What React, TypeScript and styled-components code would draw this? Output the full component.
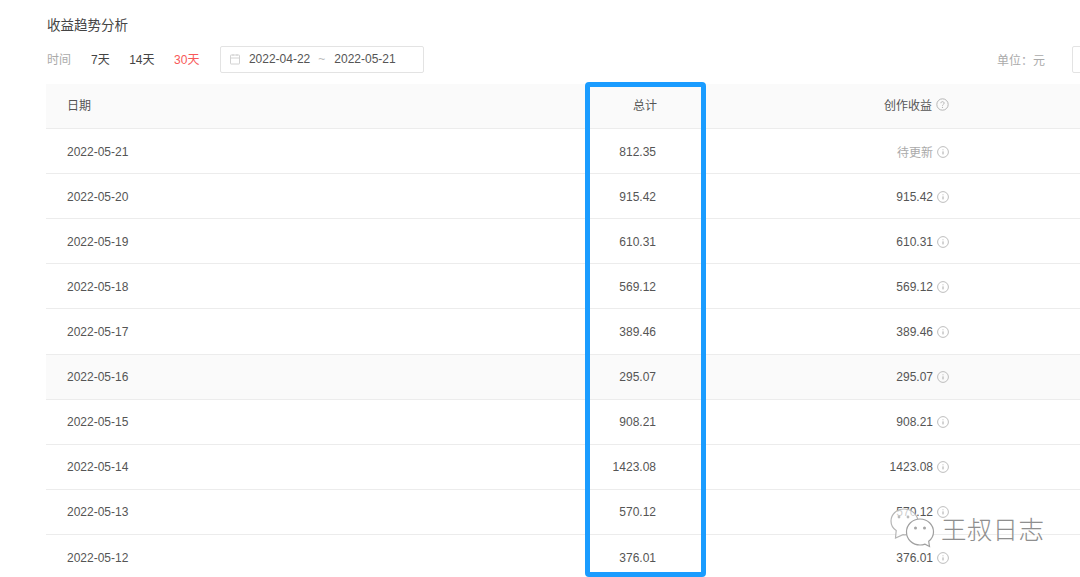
import React from 'react';
import styled, { createGlobalStyle } from 'styled-components';

const rows = [
  { date: '2022-05-21', total: '812.35', income: '待更新', pending: true },
  { date: '2022-05-20', total: '915.42', income: '915.42' },
  { date: '2022-05-19', total: '610.31', income: '610.31' },
  { date: '2022-05-18', total: '569.12', income: '569.12' },
  { date: '2022-05-17', total: '389.46', income: '389.46' },
  { date: '2022-05-16', total: '295.07', income: '295.07', hovered: true },
  { date: '2022-05-15', total: '908.21', income: '908.21' },
  { date: '2022-05-14', total: '1423.08', income: '1423.08' },
  { date: '2022-05-13', total: '570.12', income: '570.12' },
  { date: '2022-05-12', total: '376.01', income: '376.01' },
];

const GlobalStyle = createGlobalStyle`
  html, body {
    margin: 0;
    padding: 0;
    background: #fff;
    overflow: hidden;
  }
  * {
    box-sizing: border-box;
  }
`;

const Page = styled.div`
  position: relative;
  width: 1080px;
  height: 577px;
  overflow: hidden;
  padding: 16px 0 0 46px;
  background: #fff;
  font-family: "Liberation Sans", "Noto Sans CJK SC", sans-serif;
  font-size: 12px;
  color: #444;
`;

const Title = styled.h2`
  margin: 0 0 11px;
  padding-left: 1px;
  font-size: 13.5px;
  line-height: 19px;
  font-weight: 400;
  color: #444;
`;

const Toolbar = styled.div`
  display: flex;
  align-items: center;
  height: 27px;
  margin-bottom: 11px;
`;

const Label = styled.span`
  width: 45px;
  padding: 0 0 2px 1px;
  color: #aaa;
`;

const Range = styled.span<{ $active?: boolean }>`
  margin-right: 19.5px;
  padding-bottom: 2px;
  color: ${(p) => (p.$active ? '#f85959' : '#444')};
`;

const DatePicker = styled.div`
  display: flex;
  align-items: center;
  width: 204px;
  height: 27px;
  margin-left: 1px;
  padding: 0 0 2px 8px;
  border: 1px solid #e3e3e3;
  border-radius: 2px;
  color: #555;
`;

const DateSep = styled.span`
  margin: 0 9px 0 8px;
  color: #bbb;
`;

const Unit = styled.span`
  margin-left: auto;
  color: #aaa;
`;

const SelectStub = styled.div`
  width: 30px;
  height: 27px;
  margin-left: 27px;
  margin-right: -22px;
  border: 1px solid #e3e3e3;
  border-radius: 2px;
`;

const HeadRow = styled.div`
  display: grid;
  grid-template-columns: 500px 111px 292px 1fr;
  align-items: center;
  height: 45px;
  padding-bottom: 4px;
  background: #fafafa;
  border-bottom: 1px solid #ececec;
  color: #444;
`;

const Row = styled.div<{ $hovered?: boolean }>`
  display: grid;
  grid-template-columns: 500px 110px 293px 1fr;
  align-items: center;
  height: 45.12px;
  padding-top: 1px;
  background: ${(p) => (p.$hovered ? '#fafafa' : '#fff')};
  border-bottom: 1px solid #ececec;
`;

const DateCell = styled.div`
  padding-left: 21px;
  color: #555;
`;

const NumCell = styled.div<{ $muted?: boolean }>`
  display: flex;
  align-items: center;
  justify-content: flex-end;
  gap: 4px;
  color: ${(p) => (p.$muted ? '#aaa' : '#555')};
`;

const Highlight = styled.div`
  position: absolute;
  left: 585px;
  top: 82px;
  width: 121px;
  height: 495px;
  border: 5px solid #1a9cff;
  border-radius: 4px;
  pointer-events: none;
`;

const Watermark = styled.div`
  position: absolute;
  left: 889px;
  top: 506px;
  display: flex;
  align-items: flex-start;
  gap: 6px;
  pointer-events: none;
`;

const WatermarkText = styled.span`
  margin-top: 5px;
  font-size: 25.5px;
  line-height: 38px;
  font-weight: 300;
  letter-spacing: 0.3px;
  color: #8f8f8f;
  text-shadow: 0 0 2px #fff;
`;

const CalendarIcon = () => (
  <svg width="12" height="12" viewBox="0 0 12 12" fill="none" stroke="#d2d2d2" strokeWidth="1" style={{ marginRight: 8 }}>
    <rect x="1.5" y="2" width="9" height="9" rx="0.5" />
    <path d="M1.5 5h9M4 1v2M8 1v2" />
  </svg>
);

const QuestionIcon = () => (
  <svg width="13" height="13" viewBox="0 0 13 13" fill="none">
    <circle cx="6.5" cy="6.5" r="5.7" stroke="#b5b5b5" />
    <path d="M4.9 5.2c0-2.1 3.2-2.1 3.2 0 0 1.2-1.6 1.2-1.6 2.5" stroke="#b5b5b5" />
    <circle cx="6.5" cy="9.4" r="0.6" fill="#b5b5b5" />
  </svg>
);

const InfoIcon = () => (
  <svg width="12" height="12" viewBox="0 0 12 12" fill="none">
    <circle cx="6" cy="6" r="5.4" stroke="#bdbdbd" />
    <path d="M6 5.4v3" stroke="#a8a8a8" />
    <circle cx="6" cy="3.8" r="0.5" fill="#a8a8a8" />
  </svg>
);

const WeChatLogo = () => (
  <svg width="46" height="42" viewBox="0 0 46 42" fill="none">
    <path
      d="M15 3C7.800 3 2 8.300 2 15c0 4 2 7.400 5.200 9.600L6.500 32l7.500-3.300c.6.100 1.200.1 1.800.1 6.500 0 12.700-4 13.200-12.800C29 8.300 22.200 3 15 3z"
      fill="rgba(255,255,255,0.72)"
      stroke="#b5b5b5"
      strokeWidth="1.200"
    />
    <path
      d="M31 13c-7.500 0-13.500 5.700-13.500 13S23.500 39 31 39c1.800 0 3.400-.3 5-.9l4.500 2.400-.8-5.200c3-2.400 4.800-5.800 4.800-9.300 0-7.300-6-13-13.500-13z"
      fill="#fff"
      stroke="#a0a0a0"
      strokeWidth="1.200"
    />
    <circle cx="10" cy="11" r="1.400" fill="#bbb" />
    <circle cx="19" cy="11" r="1.400" fill="#bbb" />
    <circle cx="26.500" cy="22" r="1.500" fill="#a5a5a5" />
    <circle cx="35.500" cy="22" r="1.500" fill="#a5a5a5" />
  </svg>
);

const App: React.FC = () => {
  return (
    <Page>
      <GlobalStyle />
      <Title>收益趋势分析</Title>
      <Toolbar>
        <Label>时间</Label>
        <Range>7天</Range>
        <Range>14天</Range>
        <Range $active>30天</Range>
        <DatePicker>
          <CalendarIcon />
          <span>2022-04-22</span>
          <DateSep>~</DateSep>
          <span>2022-05-21</span>
        </DatePicker>
        <Unit>单位：元</Unit>
        <SelectStub />
      </Toolbar>
      <HeadRow>
        <DateCell>日期</DateCell>
        <NumCell>总计</NumCell>
        <NumCell>
          创作收益
          <QuestionIcon />
        </NumCell>
      </HeadRow>
      {rows.map((r) => (
        <Row key={r.date} $hovered={r.hovered}>
          <DateCell>{r.date}</DateCell>
          <NumCell>{r.total}</NumCell>
          <NumCell $muted={r.pending}>
            {r.income}
            <InfoIcon />
          </NumCell>
        </Row>
      ))}
      <Highlight />
      <Watermark>
        <WeChatLogo />
        <WatermarkText>王叔日志</WatermarkText>
      </Watermark>
    </Page>
  );
};

export default App;
